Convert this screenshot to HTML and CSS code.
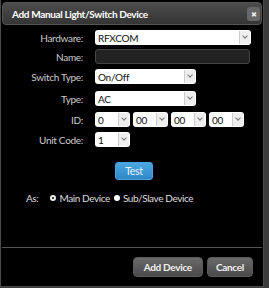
FILE: index.html
```html
<!DOCTYPE html>
<html lang="en">
<head>
    <meta charset="UTF-8">
    <title>Add Manual Light/Switch Device</title>
    <link rel="stylesheet" href="styles.css">
</head>
<body>
    <div class="dialog">
        <div class="titlebar">
            <span class="title">Add Manual Light/Switch Device</span>
            <span class="close">&#x2716;</span>
        </div>
        <div class="content">
            <div class="row first">
                <label>Hardware:</label>
                <div class="select wide"><span>RFXCOM</span><i></i></div>
            </div>
            <div class="row name">
                <label>Name:</label>
                <div class="input"></div>
            </div>
            <div class="row stype">
                <label>Switch Type:</label>
                <div class="select mid"><span>On/Off</span><i></i></div>
            </div>
            <div class="row type">
                <label>Type:</label>
                <div class="select mid"><span>AC</span><i></i></div>
            </div>
            <div class="row id">
                <label>ID:</label>
                <div class="ids">
                    <div class="select small"><span>0</span><i></i></div>
                    <div class="select small"><span>00</span><i></i></div>
                    <div class="select small"><span>00</span><i></i></div>
                    <div class="select small"><span>00</span><i></i></div>
                </div>
            </div>
            <div class="row unit">
                <label>Unit Code:</label>
                <div class="select small"><span>1</span><i></i></div>
            </div>
            <div class="testrow">
                <button type="button" class="test">Test</button>
            </div>
            <div class="asrow">
                <span class="as">As:</span>
                <span class="radio checked"></span><span>Main Device</span>
                <span class="radio"></span><span>Sub/Slave Device</span>
            </div>
        </div>
        <div class="buttons">
            <button type="button" class="btn add">Add Device</button>
            <button type="button" class="btn">Cancel</button>
        </div>
    </div>
</body>
</html>
```

FILE: styles.css
```css
body{
    margin: 0;
    background-color: #3b3b3b;
    font-family: Lato, "Noto Sans", sans-serif;
    font-size: 10px;
    letter-spacing: -0.3px;
}
.dialog{
    width: 264px;
    height: 287px;
    background-color: #000;
    border: 1px solid #4a4a4a;
    border-top: none;
    padding: 2px 1px 0 1px;
    box-sizing: border-box;
    display: flex;
    flex-direction: column;
}
.titlebar{
    height: 23px;
    border: 1px solid #555;
    border-radius: 4px;
    background: linear-gradient(#4c4c4c, #353535);
    display: flex;
    align-items: center;
    justify-content: space-between;
    padding: 0 1px 0 9px;
    box-sizing: border-box;
}
.title{
    color: #fff;
    font-weight: bold;
    font-size: 10px;
    letter-spacing: -0.35px;
}
.close{
    width: 13px;
    height: 14px;
    border-radius: 3px;
    background-color: #676767;
    color: #eee;
    font-size: 7px;
    line-height: 14px;
    text-align: center;
    letter-spacing: 0;
}
.content{
    flex: 1;
    padding-top: 5px;
}
.row{
    display: flex;
    align-items: center;
    height: 15px;
}
.row label{
    width: 81px;
    text-align: right;
    color: #ccc;
    margin-right: 12px;
}
.name{ margin-top: 4px; }
.stype{ margin-top: 5px; }
.type{ margin-top: 7px; }
.id{ margin-top: 6px; }
.unit{ margin-top: 5px; }
.select{
    height: 15px;
    background-color: #fff;
    border-radius: 3px;
    display: flex;
    align-items: center;
    justify-content: space-between;
    box-sizing: border-box;
    padding-left: 3px;
    color: #111;
}
.select i{
    width: 10px;
    height: 13px;
    margin-right: 1px;
    background-color: #eee;
    border-left: 1px solid #ccc;
    position: relative;
}
.select i::after{
    content: "";
    position: absolute;
    left: 3px;
    top: 3px;
    width: 3px;
    height: 3px;
    border-right: 1px solid #777;
    border-bottom: 1px solid #777;
    transform: rotate(45deg);
}
.wide{ width: 156px; }
.mid{ width: 101px; }
.small{ width: 35px; }
.input{
    width: 155px;
    height: 15px;
    background-color: #222;
    border: 1px solid #444;
    border-radius: 3px;
    box-sizing: border-box;
}
.ids{
    display: flex;
    gap: 3px;
}
.testrow{
    margin-top: 15px;
    padding-left: 113px;
}
.test{
    width: 38px;
    height: 18px;
    border: 1px solid #4aa3dc;
    border-radius: 3px;
    background: linear-gradient(#4aa6e0, #2f88c6);
    color: #e8f2fa;
    font-family: inherit;
    font-size: 10.5px;
    letter-spacing: inherit;
    padding: 0;
}
.asrow{
    margin-top: 12px;
    display: flex;
    align-items: center;
    color: #ddd;
    padding-left: 24px;
    letter-spacing: -0.4px;
}
.as{
    margin-right: 12px;
}
.radio{
    width: 6px;
    height: 6px;
    border-radius: 50%;
    background-color: #fff;
    margin-right: 3px;
    margin-left: 4px;
}
.radio.checked{
    width: 2px;
    height: 2px;
    background-color: #000;
    border: 2px solid #eee;
    margin-left: 0;
}
.buttons{
    height: 37px;
    border-top: 1px solid #555;
    display: flex;
    justify-content: flex-end;
    align-items: center;
    gap: 4px;
    padding-right: 9px;
    padding-bottom: 1px;
}
.btn{
    height: 20px;
    border: 1px solid #5a5a5a;
    border-radius: 4px;
    background: linear-gradient(#6a6a6a, #4a4a4a);
    color: #f0f0f0;
    font-family: inherit;
    font-weight: bold;
    font-size: 10px;
    letter-spacing: inherit;
    padding: 0 8px;
}
.btn.add{
    padding: 0 10px;
}
```
